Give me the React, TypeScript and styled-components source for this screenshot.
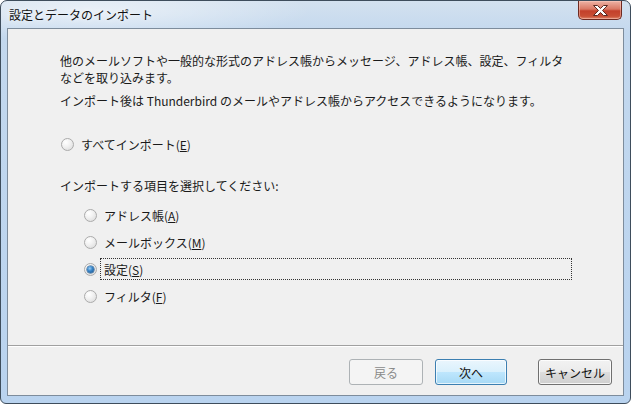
import React from "react";
import styled, { createGlobalStyle } from "styled-components";

const Global = createGlobalStyle`
  html, body { margin: 0; padding: 0; background: #ffffff; }
  body { font-family: "Noto Sans CJK JP", "Noto Sans", sans-serif; }
  * { box-sizing: border-box; }
`;

const Window = styled.div`
  width: 631px;
  height: 404px;
  border: 1px solid #3e4d5c;
  border-radius: 7px 7px 6px 6px;
  padding: 0 6px 7px 6px;
  display: flex;
  flex-direction: column;
  background:
    radial-gradient(ellipse 220px 30px at 90px 10px, rgba(255,255,255,0.55), rgba(255,255,255,0) 100%),
    linear-gradient(180deg, #d3e1ef 0%, #c3d8ee 8%, #b9d3ef 100%);
`;

const TitleBar = styled.div`
  height: 27px;
  display: flex;
  align-items: flex-start;
  justify-content: space-between;
`;

const Title = styled.span`
  font-size: 12px;
  line-height: 27px;
  color: #111;
  padding-left: 2px;
  text-shadow: 0 0 6px rgba(255,255,255,0.9);
`;

const CloseButton = styled.div`
  width: 44px;
  height: 19px;
  margin-right: 2px;
  border: 1px solid #6e2a21;
  border-top: none;
  border-radius: 0 0 5px 5px;
  display: flex;
  align-items: center;
  justify-content: center;
  background: linear-gradient(180deg, #eeb3a5 0%, #da7864 45%, #c3402b 55%, #c94f35 85%, #e08a6e 100%);
  box-shadow: inset 0 0 0 1px rgba(255,210,200,0.45);
`;

const Client = styled.div`
  flex: 1;
  border: 1px solid #7d8c9c;
  background: #f0f0f0;
  display: flex;
  flex-direction: column;
`;

const Content = styled.div`
  flex: 1;
  padding: 23px 0 0 52px;
  display: flex;
  flex-direction: column;
  font-size: 12px;
  line-height: 17px;
  color: #1a1a1a;
`;

const Para = styled.p<{ $mt?: number }>`
  margin: ${(p) => p.$mt ?? 0}px 0 0 0;
  white-space: nowrap;
`;

const RadioRow = styled.label<{ $mt?: number; $indent?: number; $h?: number }>`
  display: flex;
  align-items: center;
  height: ${(p) => p.$h ?? 17}px;
  margin-top: ${(p) => p.$mt ?? 0}px;
  margin-left: ${(p) => p.$indent ?? 0}px;
`;

const RadioMark = styled.span<{ $checked?: boolean }>`
  width: 13px;
  height: 13px;
  border-radius: 50%;
  border: 1px solid #ababab;
  background: radial-gradient(circle at 35% 30%, #ffffff 0%, #f2f2f2 40%, #d8d8d8 100%);
  display: flex;
  align-items: center;
  justify-content: center;
  flex: none;
  &::after {
    content: "";
    display: ${(p) => (p.$checked ? "block" : "none")};
    width: 7px;
    height: 7px;
    border-radius: 50%;
    background: radial-gradient(circle at 40% 35%, #9fd0f5 0%, #3a86c8 40%, #154d86 100%);
    box-shadow: 0 0 0 0.5px #1b4f80;
  }
`;

const RadioText = styled.span<{ $gap?: number; $focus?: boolean; $width?: number }>`
  margin-left: ${(p) => p.$gap ?? 7}px;
  height: 22px;
  display: flex;
  align-items: center;
  padding-left: ${(p) => (p.$focus !== undefined ? 3 : 0)}px;
  width: ${(p) => (p.$width ? `${p.$width}px` : "auto")};
  border: ${(p) => (p.$focus ? "1px dotted #333" : "1px solid transparent")};
`;

const SubList = styled.div`
  display: flex;
  flex-direction: column;
  gap: 5px;
  margin-top: 10px;
`;

const Footer = styled.div`
  height: 50px;
  border-top: 1px solid #a0a0a0;
  box-shadow: inset 0 1px 0 #ffffff;
  display: flex;
  justify-content: flex-end;
  align-items: flex-start;
  padding: 13px 11px 0 0;
`;

const Button = styled.button<{ $variant: "disabled" | "default" | "normal"; $ml?: number; $w?: number }>`
  width: ${(p) => p.$w ?? 74}px;
  height: 26px;
  margin-left: ${(p) => p.$ml ?? 0}px;
  border-radius: 3px;
  font-family: "Noto Sans CJK JP", "Noto Sans", sans-serif;
  font-size: 12px;
  padding: 0;
  display: flex;
  align-items: center;
  justify-content: center;
  ${(p) =>
    p.$variant === "disabled"
      ? `border: 1px solid #adb2b5; background: #f4f4f4; color: #8a8a8a;`
      : p.$variant === "default"
      ? `border: 1px solid #3c7fb1; color: #111;
         background: linear-gradient(180deg, #eaf6fd 0%, #d9f0fc 50%, #bee6fd 51%, #a7d9f5 100%);
         box-shadow: inset 0 0 0 1px rgba(255,255,255,0.7);`
      : `border: 1px solid #707070; color: #111;
         background: linear-gradient(180deg, #f2f2f2 0%, #ebebeb 50%, #dddddd 51%, #cfcfcf 100%);
         box-shadow: inset 0 0 0 1px rgba(255,255,255,0.8);`}
`;

const CloseIcon = () => (
  <svg width="15" height="11" viewBox="-0.5 -0.5 15 11">
    <path
      d="M0 0 H4 L7 3 L10 0 H14 L9 5 L14 10 H10 L7 7 L4 10 H0 L5 5 Z"
      fill="#ffffff"
      stroke="#5a2a22"
      strokeWidth="1"
      strokeLinejoin="round"
    />
  </svg>
);

export default function App() {
  return (
    <>
      <Global />
      <Window>
        <TitleBar>
          <Title>設定とデータのインポート</Title>
          <CloseButton>
            <CloseIcon />
          </CloseButton>
        </TitleBar>
        <Client>
          <Content>
            <Para>
              他のメールソフトや一般的な形式のアドレス帳からメッセージ、アドレス帳、設定、フィルタ
              <br />
              などを取り込みます。
            </Para>
            <Para $mt={6}>インポート後は Thunderbird のメールやアドレス帳からアクセスできるようになります。</Para>
            <RadioRow $mt={27} $indent={1}>
              <RadioMark />
              <RadioText $gap={6}>
                すべてインポート(<u>E</u>)
              </RadioText>
            </RadioRow>
            <Para $mt={24}>インポートする項目を選択してください:</Para>
            <SubList>
              <RadioRow $indent={24} $h={22}>
                <RadioMark />
                <RadioText $gap={3} $focus={false}>
                  アドレス帳(<u>A</u>)
                </RadioText>
              </RadioRow>
              <RadioRow $indent={24} $h={22}>
                <RadioMark />
                <RadioText $gap={3} $focus={false}>
                  メールボックス(<u>M</u>)
                </RadioText>
              </RadioRow>
              <RadioRow $indent={24} $h={22}>
                <RadioMark $checked />
                <RadioText $gap={3} $focus={true} $width={472}>
                  設定(<u>S</u>)
                </RadioText>
              </RadioRow>
              <RadioRow $indent={24} $h={22}>
                <RadioMark />
                <RadioText $gap={3} $focus={false}>
                  フィルタ(<u>F</u>)
                </RadioText>
              </RadioRow>
            </SubList>
          </Content>
          <Footer>
            <Button $variant="disabled" disabled>
              戻る
            </Button>
            <Button $variant="default" $ml={12} $w={72}>
              次へ
            </Button>
            <Button $variant="normal" $ml={31}>
              キャンセル
            </Button>
          </Footer>
        </Client>
      </Window>
    </>
  );
}
